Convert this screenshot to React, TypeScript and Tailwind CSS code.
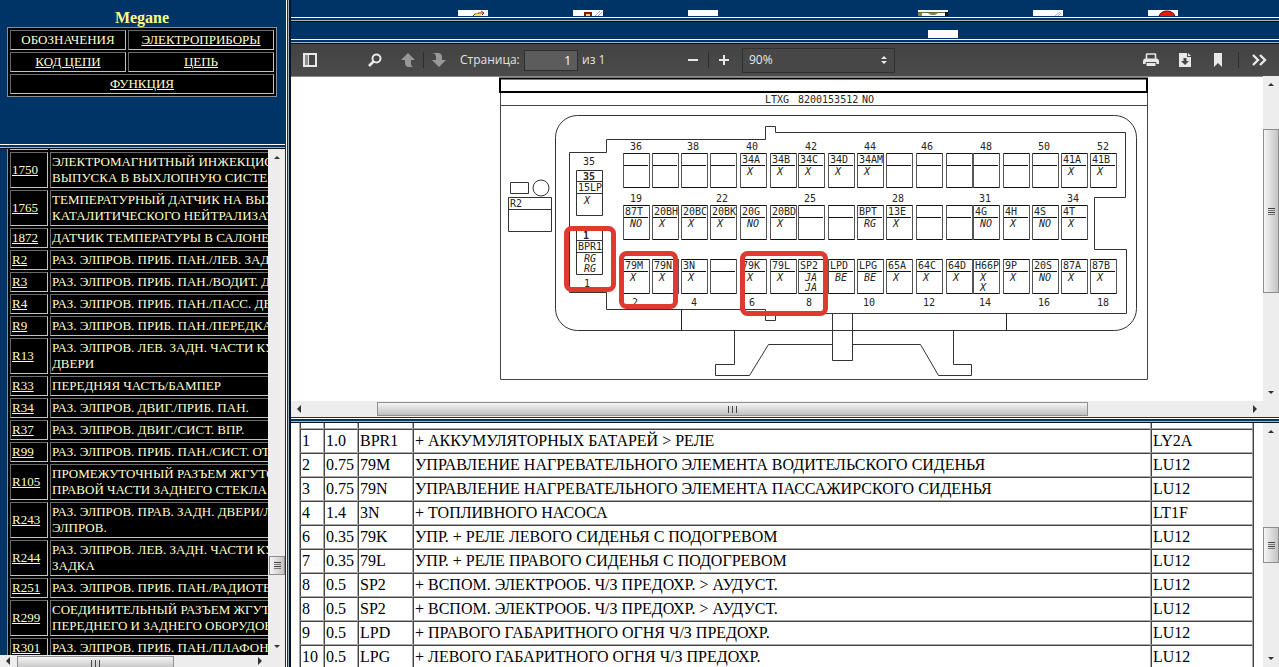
import React from 'react';

const NAV_ROWS = [
  { code: '1750', lines: ['ЭЛЕКТРОМАГНИТНЫЙ ИНЖЕКЦИО', 'ВЫПУСКА В ВЫХЛОПНУЮ СИСТЕМ'] },
  { code: '1765', lines: ['ТЕМПЕРАТУРНЫЙ ДАТЧИК НА ВЫХ', 'КАТАЛИТИЧЕСКОГО НЕЙТРАЛИЗАТ'] },
  { code: '1872', lines: ['ДАТЧИК ТЕМПЕРАТУРЫ В САЛОНЕ'] },
  { code: 'R2', lines: ['РАЗ. ЭЛПРОВ. ПРИБ. ПАН./ЛЕВ. ЗАДН'] },
  { code: 'R3', lines: ['РАЗ. ЭЛПРОВ. ПРИБ. ПАН./ВОДИТ. ДВ'] },
  { code: 'R4', lines: ['РАЗ. ЭЛПРОВ. ПРИБ. ПАН./ПАСС. ДВЕ'] },
  { code: 'R9', lines: ['РАЗ. ЭЛПРОВ. ПРИБ. ПАН./ПЕРЕДКА'] },
  { code: 'R13', lines: ['РАЗ. ЭЛПРОВ. ЛЕВ. ЗАДН. ЧАСТИ КУ', 'ДВЕРИ'] },
  { code: 'R33', lines: ['ПЕРЕДНЯЯ ЧАСТЬ/БАМПЕР'] },
  { code: 'R34', lines: ['РАЗ. ЭЛПРОВ. ДВИГ./ПРИБ. ПАН.'] },
  { code: 'R37', lines: ['РАЗ. ЭЛПРОВ. ДВИГ./СИСТ. ВПР.'] },
  { code: 'R99', lines: ['РАЗ. ЭЛПРОВ. ПРИБ. ПАН./СИСТ. ОТО'] },
  { code: 'R105', lines: ['ПРОМЕЖУТОЧНЫЙ РАЗЪЕМ ЖГУТО', 'ПРАВОЙ ЧАСТИ ЗАДНЕГО СТЕКЛА И'] },
  { code: 'R243', lines: ['РАЗ. ЭЛПРОВ. ПРАВ. ЗАДН. ДВЕРИ/Л', 'ЭЛПРОВ.'] },
  { code: 'R244', lines: ['РАЗ. ЭЛПРОВ. ЛЕВ. ЗАДН. ЧАСТИ КУ', 'ЗАДКА'] },
  { code: 'R251', lines: ['РАЗ. ЭЛПРОВ. ПРИБ. ПАН./РАДИОТЕ'] },
  { code: 'R299', lines: ['СОЕДИНИТЕЛЬНЫЙ РАЗЪЕМ ЖГУТА', 'ПЕРЕДНЕГО И ЗАДНЕГО ОБОРУДОВ'] },
  { code: 'R301', lines: ['РАЗ. ЭЛПРОВ. ПРИБ. ПАН./ПЛАФОНА'] },
];

const WIRES = [
  ['1', '1.0', 'BPR1', '+ АККУМУЛЯТОРНЫХ БАТАРЕЙ > РЕЛЕ', 'LY2A'],
  ['2', '0.75', '79M', 'УПРАВЛЕНИЕ НАГРЕВАТЕЛЬНОГО ЭЛЕМЕНТА ВОДИТЕЛЬСКОГО СИДЕНЬЯ', 'LU12'],
  ['3', '0.75', '79N', 'УПРАВЛЕНИЕ НАГРЕВАТЕЛЬНОГО ЭЛЕМЕНТА ПАССАЖИРСКОГО СИДЕНЬЯ', 'LU12'],
  ['4', '1.4', '3N', '+ ТОПЛИВНОГО НАСОСА', 'LT1F'],
  ['6', '0.35', '79K', 'УПР. + РЕЛЕ ЛЕВОГО СИДЕНЬЯ С ПОДОГРЕВОМ', 'LU12'],
  ['7', '0.35', '79L', 'УПР. + РЕЛЕ ПРАВОГО СИДЕНЬЯ С ПОДОГРЕВОМ', 'LU12'],
  ['8', '0.5', 'SP2', '+ ВСПОМ. ЭЛЕКТРООБ. Ч/З ПРЕДОХР. > АУДУСТ.', 'LU12'],
  ['8', '0.5', 'SP2', '+ ВСПОМ. ЭЛЕКТРООБ. Ч/З ПРЕДОХР. > АУДУСТ.', 'LU12'],
  ['9', '0.5', 'LPD', '+ ПРАВОГО ГАБАРИТНОГО ОГНЯ Ч/З ПРЕДОХР.', 'LU12'],
  ['10', '0.5', 'LPG', '+ ЛЕВОГО ГАБАРИТНОГО ОГНЯ Ч/З ПРЕДОХР.', 'LU12'],
];

// Left edge of every pin column in the connector
const PIN_X = [623, 652, 681, 710, 740, 770, 798, 828, 857, 886, 916, 946, 973, 1003, 1032, 1061, 1090];

// One string per pin: name, then colours
const PIN_ROWS = [
  {
    y: 153,
    pins: ['', '', '', '', '34A X', '34B X', '34C X', '34D X', '34AM X', '', '', '', '', '', '', '41A X', '41B X'],
  },
  {
    y: 205,
    pins: ['87T NO', '20BH X', '20BC X', '20BK X', '20G NO', '20BD X', '', '', 'BPT RG', '13E X', '', '', '4G NO', '4H X', '4S NO', '4T X'],
  },
  {
    y: 259,
    pins: ['79M X', '79N X', '3N X', '', '79K X', '79L X', 'SP2 JA JA', 'LPD BE', 'LPG BE', '65A X', '64C X', '64D X', 'H66P X X', '9P X', '20S NO', '87A X', '87B X'],
  },
];

const PIN_NUMBERS: [string, number, number][] = [
  ['36', 636, 150], ['38', 693, 150], ['40', 752, 150], ['42', 811, 150], ['44', 870, 150],
  ['46', 927, 150], ['48', 986, 150], ['50', 1044, 150], ['52', 1103, 150],
  ['19', 636, 202], ['22', 722, 202], ['25', 810, 202], ['28', 898, 202], ['31', 985, 202], ['34', 1073, 202],
  ['2', 635, 306], ['4', 694, 306], ['6', 752, 306], ['8', 809, 306], ['10', 869, 306],
  ['12', 929, 306], ['14', 985, 306], ['16', 1044, 306], ['18', 1103, 306],
  ['35', 589, 165], ['1', 587, 287],
];

const Arrow = ({ d }: { d: string }) => (
  <svg width="8" height="8" viewBox="0 0 8 8" className="shrink-0" aria-hidden="true">
    <path d={d} fill="#333" />
  </svg>
);

const VScroll = ({ thumb }: { thumb: string }) => (
  <div className="flex w-4 shrink-0 flex-col items-center justify-between bg-[#ededed] py-1">
    <Arrow d="M1 6L4 3L7 6Z" />
    <div className="w-full flex-1">
      <div className={`flex w-full flex-col items-center justify-center gap-px border border-[#8e8e8e] bg-linear-to-r from-[#f5f5f5] to-[#c4c4c4] ${thumb}`}>
        <div className="h-px w-[7px] bg-[#444]" />
        <div className="h-px w-[7px] bg-[#777]" />
        <div className="h-px w-[7px] bg-[#444]" />
        <div className="h-px w-[7px] bg-[#777]" />
      </div>
    </div>
    <Arrow d="M1 2L4 5L7 2Z" />
  </div>
);

const HScroll = ({ thumb }: { thumb: string }) => (
  <div className="flex min-w-0 flex-1 items-center bg-[#ededed] px-1">
    <Arrow d="M6 0L2 4L6 8Z" />
    <div className="h-full min-w-0 flex-1 py-px">
      <div className={`flex h-[14px] items-center justify-center gap-px border border-[#8e8e8e] bg-linear-to-b from-[#f5f5f5] to-[#c0c0c0] ${thumb}`}>
        <div className="h-[7px] w-px bg-[#444]" />
        <div className="h-[7px] w-px bg-[#ccc]" />
        <div className="h-[7px] w-px bg-[#444]" />
        <div className="h-[7px] w-px bg-[#ccc]" />
        <div className="h-[7px] w-px bg-[#444]" />
      </div>
    </div>
    <Arrow d="M2 0L6 4L2 8Z" />
  </div>
);

// Horizontal frame border
const FrameLine = () => (
  <div className="shrink-0 bg-[#003366]">
    <div className="h-px bg-white" />
    <div className="h-[2px]" />
    <div className="h-px bg-[#a9b4bd]" />
    <div className="h-px bg-[#00101f]" />
  </div>
);

const Separator = () => <div className="h-4 w-px bg-[#2c2c2c]" />;

const navCell = 'border border-t-[#6b6b6b] border-l-[#6b6b6b] border-r-[#c4c4c4] border-b-[#c4c4c4] p-px';

const NavHeader = () => (
  <header className="h-[144px] shrink-0 bg-[#003366] pl-[7px] pt-2">
    <h1 className="w-[270px] text-center text-base leading-[19px] font-bold text-[#ffff80]">Megane</h1>
    <table className="w-[270px] border-separate border-spacing-[2px] border border-[#8a8f94] bg-black text-center text-[13px] leading-4 text-[#ffffcc]">
      <tbody>
        <tr>
          <td className={`w-[116px] ${navCell}`}>ОБОЗНАЧЕНИЯ</td>
          <td className={navCell}><a href="#devices" className="underline">ЭЛЕКТРОПРИБОРЫ</a></td>
        </tr>
        <tr>
          <td className={navCell}><a href="#code" className="underline">КОД ЦЕПИ</a></td>
          <td className={navCell}><a href="#circuit" className="underline">ЦЕПЬ</a></td>
        </tr>
        <tr>
          <td colSpan={2} className={navCell}><a href="#function" className="underline">ФУНКЦИЯ</a></td>
        </tr>
      </tbody>
    </table>
  </header>
);

const NavList = () => (
  <nav className="flex min-h-0 flex-1 flex-col bg-[#003366]">
    <div className="flex min-h-0 flex-1">
      <div className="min-w-0 flex-1 overflow-hidden pl-[7px]">
        <table className="-mt-[3px] w-[340px] table-fixed border-separate border-spacing-[2px] border-l border-[#8a8f94] bg-black text-[13px] leading-4 text-[#ffffcc]">
          <colgroup>
            <col className="w-[38px]" />
            <col />
          </colgroup>
          <tbody>
            {/* Tail of the row scrolled out above */}
            <tr className="h-[2px]">
              <td className="border-b border-[#c4c4c4] p-0" />
              <td className="border-b border-[#c4c4c4] p-0" />
            </tr>
            {NAV_ROWS.map((row) => (
              <tr key={row.code}>
                <td className={navCell}>
                  <a href={`#${row.code}`} className="underline">{row.code}</a>
                </td>
                <td className={`whitespace-nowrap ${navCell}`}>
                  {row.lines.map((line) => (
                    <div key={line}>{line}</div>
                  ))}
                </td>
              </tr>
            ))}
          </tbody>
        </table>
      </div>
      <div className="flex w-[17px] bg-[#ededed] pl-px">
        <VScroll thumb="mt-[395px] h-[19px]" />
      </div>
    </div>
    <div className="flex h-3 shrink-0 overflow-hidden">
      <HScroll thumb="ml-[5px] w-[157px]" />
      <div className="w-[17px] bg-[#ededed]" />
    </div>
  </nav>
);

const TopIcons = () => (
  <div className="flex h-[17px] shrink-0 gap-[85px] overflow-hidden bg-[#003366] pt-[10px] pl-[167px]">
    <svg width="30" height="6" viewBox="0 0 30 6" className="shrink-0 bg-white">
      <path d="M15 6L17 4H21" stroke="#7a1f00" fill="none" />
      <path d="M17 6H23V4H18Z" fill="#ffe94a" />
      <path d="M20 3H26M23 1L26 3L24 5" stroke="#b01c00" fill="none" />
    </svg>
    <svg width="30" height="6" viewBox="0 0 30 6" className="shrink-0 bg-white">
      <path d="M12 6V3H18V6" stroke="#8a1a00" strokeWidth="2" fill="#ffd76b" />
      <path d="M22 6L27 1M25 6L29 2" stroke="#aaa" fill="none" />
    </svg>
    <div className="h-[6px] w-[30px] shrink-0 bg-white" />
    <div className="h-[6px] w-[30px] shrink-0" />
    <svg width="30" height="6" viewBox="0 0 30 6" className="shrink-0 bg-white">
      <path d="M0 2.5H30" stroke="#6b6535" />
      <path d="M0 3H4V6H0Z" fill="#8c8550" />
      <path d="M10 3H20L17 5H13Z" fill="#8c8550" />
      <path d="M27 2H30V6H27Z" fill="#111" />
    </svg>
    <svg width="30" height="6" viewBox="0 0 30 6" className="shrink-0 bg-white">
      <path d="M22 6L27 2M25 6L28 3" stroke="#aaa" fill="none" />
    </svg>
    <svg width="30" height="6" viewBox="0 0 30 6" className="shrink-0 bg-white">
      <ellipse cx="19" cy="7" rx="8" ry="6" fill="#f01800" stroke="#6b0000" />
    </svg>
  </div>
);

const iconBtn = 'flex h-6 items-center justify-center';

const PdfToolbar = () => (
  <div className="flex h-8 shrink-0 items-center justify-between bg-linear-to-b from-[#424242] to-[#4b4b4b] px-3 font-['Open_Sans','Noto_Sans',sans-serif] text-xs text-[#e2e2e2]">
    <div className="flex items-center">
      <button aria-label="Боковая панель" className={`w-[14px] ${iconBtn}`}>
        <svg width="14" height="14" viewBox="0 0 14 14">
          <path d="M1 1H13V13H1Z" fill="none" stroke="#e8e8e8" strokeWidth="2" />
          <path d="M2 2H5V12H2Z" fill="#8c8c8c" />
          <path d="M5.5 2V12" stroke="#e8e8e8" />
        </svg>
      </button>
      <button aria-label="Найти" className={`ml-[51px] w-[14px] ${iconBtn}`}>
        <svg width="14" height="14" viewBox="0 0 14 14">
          <circle cx="8.5" cy="5.5" r="4" fill="none" stroke="#e8e8e8" strokeWidth="2" />
          <path d="M5.5 8.5L1 13" stroke="#e8e8e8" strokeWidth="2.6" />
        </svg>
      </button>
      <button aria-label="Предыдущая" className={`ml-[18px] w-4 ${iconBtn}`}>
        <svg width="16" height="16" viewBox="0 0 16 16">
          <path d="M8 1L15 8H11V12Q11 14 13 15H8Q5 14 5 11V8H1Z" fill="#989898" />
        </svg>
      </button>
      <div className="ml-[7px]"><Separator /></div>
      <button aria-label="Следующая" className={`ml-[7px] w-4 ${iconBtn}`}>
        <svg width="16" height="16" viewBox="0 0 16 16">
          <path d="M8 15L1 8H5V5Q5 2 2 1H8Q11 2 11 5V8H15Z" fill="#989898" />
        </svg>
      </button>
      <label htmlFor="page" className="ml-[13px] w-16">Страница:</label>
      <input
        id="page"
        type="text"
        defaultValue="1"
        className="h-[21px] w-[54px] border border-[#2e2e2e] bg-[#5c5c5c] px-[6px] text-right text-white"
      />
      <span className="ml-1 w-[105px] whitespace-nowrap">из 1</span>
      <button aria-label="Уменьшить" className={`w-3 ${iconBtn}`}>
        <span className="h-[2px] w-[10px] bg-[#e8e8e8]" />
      </button>
      <div className="ml-[9px]"><Separator /></div>
      <button aria-label="Увеличить" className={`ml-[10px] w-[10px] ${iconBtn}`}>
        <svg width="10" height="10" viewBox="0 0 10 10">
          <path d="M5 0V10M0 5H10" stroke="#e8e8e8" strokeWidth="2" />
        </svg>
      </button>
      <div className="relative ml-[13px]">
        <select
          aria-label="Масштаб"
          className="h-[25px] w-[153px] appearance-none border border-[#303030] bg-[#474747] px-[6px] text-[#e8e8e8]"
        >
          <option>90%</option>
        </select>
        <svg width="6" height="8" viewBox="0 0 6 8" className="pointer-events-none absolute top-2 right-2">
          <path d="M0 3L3 0L6 3ZM0 5L3 8L6 5Z" fill="#e8e8e8" />
        </svg>
      </div>
    </div>
    <div className="flex items-center">
      <button aria-label="Печать" className={`w-4 ${iconBtn}`}>
        <svg width="16" height="14" viewBox="0 0 16 14">
          <path d="M3.5 6V1.5Q3.5 1 4 1H12Q12.500 1 12.500 1.500V6" fill="none" stroke="#e8e8e8" strokeWidth="1.6" />
          <path d="M2 5.500H14Q16 6 16 8V11H0V8Q0 6 2 5.500Z" fill="#e8e8e8" />
          <path d="M3 9.500H13V13.500H3Z" fill="#e8e8e8" stroke="#4a4a4a" />
        </svg>
      </button>
      <button aria-label="Загрузить" className={`ml-5 w-3 ${iconBtn}`}>
        <svg width="12" height="14" viewBox="0 0 12 14">
          <path d="M0 0H8V4H12V14H0Z" fill="#e8e8e8" />
          <path d="M9 0L12 3H9Z" fill="#e8e8e8" />
          <path d="M4.5 5H7.5V8H10L6 12L2 8H4.5Z" fill="#474747" />
        </svg>
      </button>
      <button aria-label="Закладка" className={`ml-[23px] w-2 ${iconBtn}`}>
        <svg width="8" height="14" viewBox="0 0 8 14">
          <path d="M0 0H8V14L4 10L0 14Z" fill="#e8e8e8" />
        </svg>
      </button>
      <div className="ml-4"><Separator /></div>
      <button aria-label="Инструменты" className={`ml-[13px] w-[15px] ${iconBtn}`}>
        <svg width="15" height="12" viewBox="0 0 15 12">
          <path d="M1 1L6 6L1 11M8 1L13 6L8 11" fill="none" stroke="#e8e8e8" strokeWidth="2.4" />
        </svg>
      </button>
    </div>
  </div>
);

const Pin = ({ x, y, text }: { x: number; y: number; text: string }) => {
  const [name, ...colours] = text.split(' ');
  return (
    <g>
      <path d={`M${x} ${y + 0.5}H${x + 27}M${x} ${y + 34.5}H${x + 27}M${x + 1} ${y + 12.5}H${x + 25}`} stroke="#111" />
      <path d={`M${x + 0.5} ${y}V${y + 35}M${x + 26.5} ${y}V${y + 35}`} stroke="#555" />
      <text x={x + 2} y={y + 10}>{name}</text>
      {colours.map((colour, i) => (
        <text key={i} x={x + (colour === 'X' ? 10 : 13)} y={y + 22 + i * 10} textAnchor="middle" fontStyle="italic">
          {colour}
        </text>
      ))}
    </g>
  );
};

const Diagram = () => (
  <svg
    width="650"
    height="304"
    viewBox="499 77 650 304"
    className="shrink-0 font-['DejaVu_Sans_Mono','Liberation_Mono',monospace] text-[10px]"
    fill="none"
  >
    {/* Sheet */}
    <path d="M500 78.5H1147V92H500Z" stroke="#000" strokeWidth="2" />
    <path d="M500.5 93V379.5H1147.5V93M500 105.5H1147" stroke="#444" />
    {/* Connector body */}
    <rect x="555.5" y="115.5" width="581" height="215" rx="22" stroke="#333" />
    <path
      d="M569.5 152.5H606.5V139.5H765.5V126.5H775.5V132.5H1125.5V197.5H1094.5V249.5H1126.5V313.5H775.5V320.5H765.5V309.5H606.5V292.5H569.5Z"
      stroke="#333"
    />
    <path d="M681.5 309V330M1006.5 313V330" stroke="#222" />
    <path d="M734.5 330V364.5H715.5V375.5H749.5L768.5 344.5H832.5M852.5 344.5H920.5L938.5 375.5H971.5V364.5H953.5V330" stroke="#333" />
    <path d="M832.5 313V360.5H852.5V313" stroke="#333" />
    {/* Side parts */}
    <path d="M510.5 182.5H528.5V193.5H510.5ZM508.5 197.5H551.5V231.5H508.5ZM508.5 209.5H551.5" stroke="#333" />
    <circle cx="541" cy="188" r="8" stroke="#333" />
    <path d="M576.5 170.5H602.5V215.5H576.5ZM576.5 181.5H602.5M576.5 193.5H602.5" stroke="#333" />
    <path d="M576.5 230.5H602.5V274.5H576.5ZM576.5 240.5H602.5M576.5 252.5H602.5" stroke="#333" />
    <g fill="#262626">
      {PIN_ROWS.map((row) =>
        row.pins.map((text, i) => <Pin key={PIN_X[i]} x={PIN_X[i]} y={row.y} text={text} />)
      )}
      {PIN_NUMBERS.map(([text, x, y]) => (
        <text key={text} x={x} y={y} textAnchor="middle">{text}</text>
      ))}
      <text x="765" y="103">LTXG</text>
      <text x="798" y="103">8200153512</text>
      <text x="862" y="103">NO</text>
      <text x="510" y="207">R2</text>
      <text x="589" y="180" textAnchor="middle" fontWeight="bold">35</text>
      <text x="578" y="191">15LP</text>
      <text x="587" y="204" textAnchor="middle" fontStyle="italic">X</text>
      <text x="586" y="239" textAnchor="middle" fontWeight="bold">1</text>
      <text x="578" y="250">BPR1</text>
      <text x="590" y="262" textAnchor="middle" fontStyle="italic">RG</text>
      <text x="590" y="272" textAnchor="middle" fontStyle="italic">RG</text>
    </g>
    {/* Marked pins */}
    <g stroke="#e03a30" strokeWidth="5">
      <rect x="566.5" y="228.5" width="47" height="61" rx="5" />
      <rect x="621.5" y="253.5" width="54" height="53" rx="5" />
      <rect x="742.5" y="253.5" width="83" height="60" rx="5" />
    </g>
  </svg>
);

const PdfView = () => (
  <section className="flex h-[374px] shrink-0 flex-col border-b border-[#003366] bg-white">
    <PdfToolbar />
    <div className="flex min-h-0 flex-1">
      <div className="flex min-w-0 flex-1 overflow-hidden border-t border-[#8a8a8a] pl-[208px]">
        <Diagram />
      </div>
      <VScroll thumb="mt-[41px] h-[164px]" />
    </div>
    <div className="flex h-4 shrink-0">
      <HScroll thumb="ml-[74px] w-[75%]" />
      <div className="w-4 bg-[#ededed]" />
    </div>
  </section>
);

const wireCell = 'border border-t-[#444] border-l-[#444] border-r-[#aaa] border-b-[#aaa] p-px whitespace-nowrap';

const WireTable = () => (
  <section className="flex min-h-0 flex-1 bg-white">
    <div className="min-w-0 flex-1 overflow-hidden pr-[9px] pl-2">
      <table className="w-full table-fixed border-separate border-spacing-0 border-x border-l-[#aaa] border-r-[#444] text-base leading-5 text-black">
        <colgroup>
          <col className="w-6" />
          <col className="w-[34px]" />
          <col className="w-[55px]" />
          <col />
          <col className="w-[102px]" />
        </colgroup>
        <tbody>
          <tr className="h-[6px] leading-none">
            {[0, 1, 2, 3, 4].map((i) => (
              <td key={i} className="border border-t-0 border-l-[#444] border-r-[#aaa] border-b-[#aaa] p-0" />
            ))}
          </tr>
          {WIRES.map((row, r) => (
            <tr key={r}>
              {row.map((value, i) => (
                <td key={i} className={wireCell}>{value}</td>
              ))}
            </tr>
          ))}
        </tbody>
      </table>
    </div>
    <VScroll thumb="mt-[92px] h-[36px]" />
  </section>
);

const App = () => (
  <div className="flex h-screen w-full overflow-hidden bg-[#003366] font-['Liberation_Serif',serif]">
    <aside className="flex w-[285px] shrink-0 flex-col">
      <NavHeader />
      <FrameLine />
      <NavList />
    </aside>
    {/* Vertical frame border */}
    <div className="flex w-[6px] shrink-0">
      <div className="w-px" />
      <div className="w-px bg-white" />
      <div className="w-px" />
      <div className="w-px bg-[#a9b4bd]" />
      <div className="w-[2px] bg-[#001530]" />
    </div>
    <main className="flex min-w-0 flex-1 flex-col">
      <TopIcons />
      <FrameLine />
      <div className="flex h-[17px] shrink-0 bg-[#003366] pt-2 pl-[637px]">
        <div className="h-2 w-[30px] bg-white" />
      </div>
      <FrameLine />
      <PdfView />
      <FrameLine />
      <WireTable />
    </main>
  </div>
);

export default App;
